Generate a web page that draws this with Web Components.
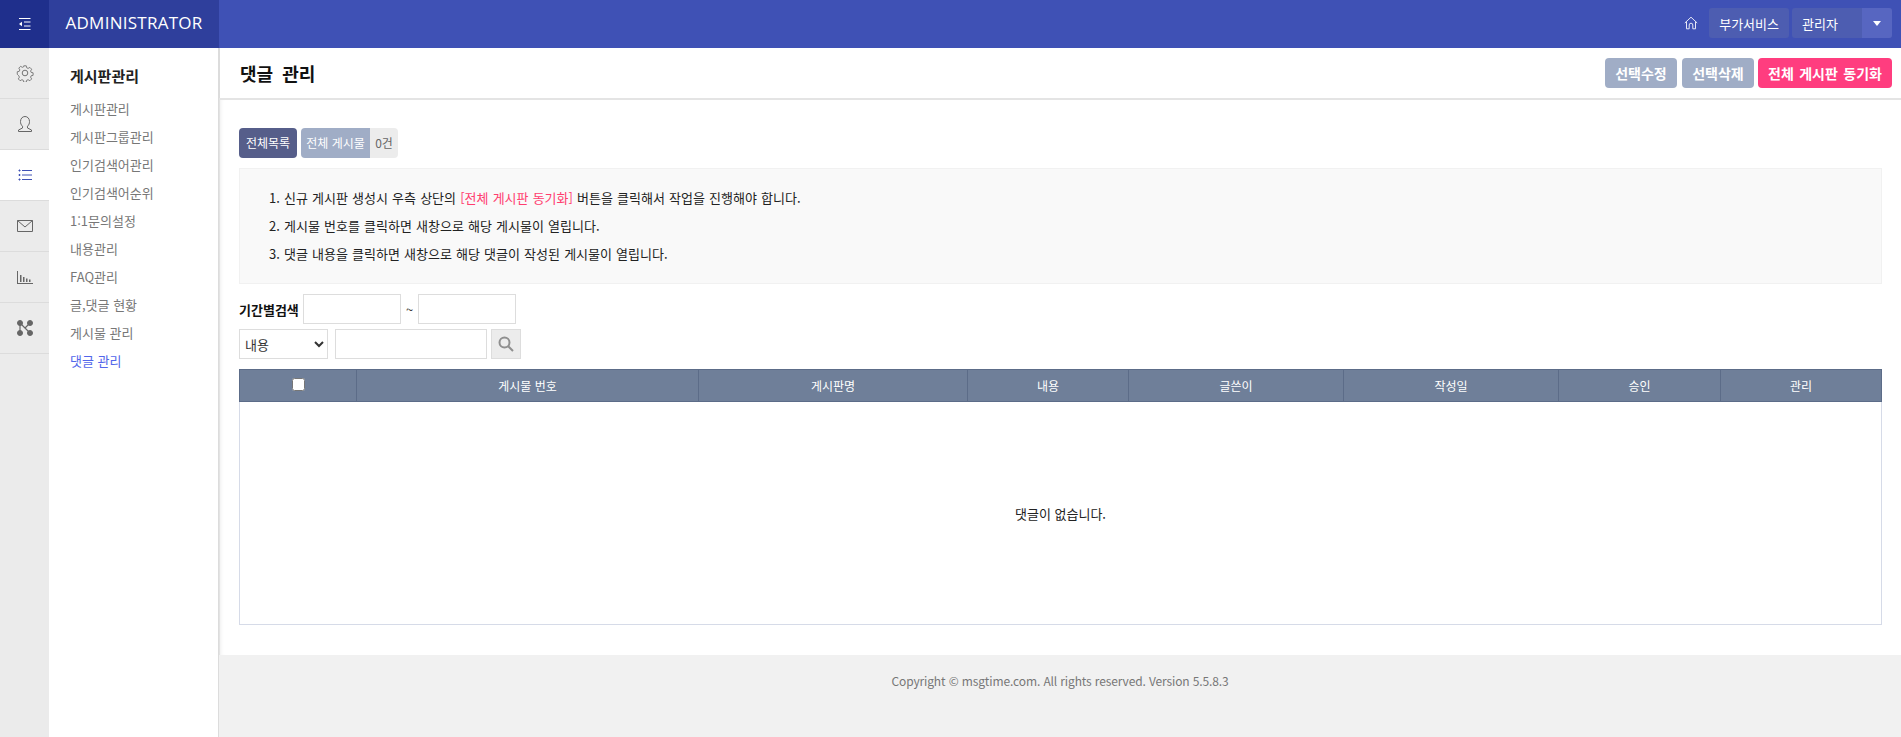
<!DOCTYPE html>
<html lang="ko">
<head>
<meta charset="utf-8">
<title>댓글 관리</title>
<style>
  html, body { margin: 0; height: 100%; background: #fff; }
  body { font: 13px "Noto Sans CJK KR", "Noto Sans", sans-serif; color: #222; overflow: hidden; }
  admin-shell { height: 737px; }
</style>
</head>
<body>

<admin-shell>
  <admin-topbar slot="top"></admin-topbar>
  <admin-rail slot="rail"></admin-rail>
  <admin-menu slot="menu"></admin-menu>
  <page-head title="댓글 관리"></page-head>
  <board-stats></board-stats>
  <notice-box>
    <li>신규 게시판 생성시 우측 상단의 <b>[전체 게시판 동기화]</b> 버튼을 클릭해서 작업을 진행해야 합니다.</li>
    <li>게시물 번호를 클릭하면 새창으로 해당 게시물이 열립니다.</li>
    <li>댓글 내용을 클릭하면 새창으로 해당 댓글이 작성된 게시물이 열립니다.</li>
  </notice-box>
  <search-form></search-form>
  <comment-table></comment-table>
  <page-footer></page-footer>
</admin-shell>

<script>
const FONT = '"Noto Sans CJK KR", "Noto Sans", sans-serif';

function shadow(el, html) {
  const root = el.attachShadow({mode: 'open'});
  root.innerHTML = html;
  return root;
}

customElements.define('admin-shell', class extends HTMLElement {
  constructor() {
    super();
    shadow(this, `
      <style>
        :host { display: grid; grid-template-rows: 48px 1fr; grid-template-columns: 49px 170px 1fr; }
        .top { grid-column: 1 / 4; }
        .main { display: flex; flex-direction: column; min-width: 0; }
        .body { padding: 28px 19px 0 20px; flex: 1; display: flex; flex-direction: column; box-shadow: inset 6px 0 5px -5px #e8e8e8; }
      </style>
      <div class="top"><slot name="top"></slot></div>
      <slot name="rail"></slot>
      <slot name="menu"></slot>
      <div class="main">
        <slot name="head"></slot>
        <div class="body"><slot></slot></div>
        <slot name="foot"></slot>
      </div>`);
  }
  connectedCallback() {
    this.querySelector('page-head').slot = 'head';
    this.querySelector('page-footer').slot = 'foot';
  }
});

customElements.define('admin-topbar', class extends HTMLElement {
  constructor() {
    super();
    shadow(this, `
      <style>
        :host { display: flex; height: 48px; background: #3f51b5; color: #fff; align-items: center; font-family: ${FONT}; }
        .toggle { width: 49px; height: 48px; background: #1f2f8c; display: flex; align-items: center; justify-content: center; }
        .brand { width: 170px; height: 48px; background: #2f3f9c; text-align: center; font: 17px/45px "Open Sans", ${FONT}; letter-spacing: .25px; }
        .right { margin: -2px 9px 0 auto; display: flex; align-items: center; gap: 3px; font-size: 13px; }
        .home { margin-right: 8px; display: flex; }
        .chip { height: 30px; background: #4d5db1; border-radius: 3px; display: flex; align-items: center; padding: 0 10px; }
        .user { width: 100px; box-sizing: border-box; padding: 0 0 0 10px; justify-content: space-between; overflow: hidden; }
        .caret { width: 30px; height: 30px; background: #5766c1; display: flex; align-items: center; justify-content: center; }
      </style>
      <div class="toggle">
        <svg width="14" height="14" viewBox="0 0 14 14" fill="none" stroke="#fff" stroke-width="1">
          <path d="M1 1.500h11.500M6 5h6.500M6 9h6.500M1 12.500h11.500"/><path d="M1 7l3-2.200v4.400z" fill="#fff" stroke="none"/>
        </svg>
      </div>
      <div class="brand">ADMINISTRATOR</div>
      <div class="right">
        <span class="home">
          <svg width="14" height="14" viewBox="0 0 14 14" fill="none" stroke="#e6e8f6" stroke-width="1">
            <path d="M.8 7L7 1.200 13.200 7M2.500 5.800V12.800H5.200V9a1.800 1.800 0 0 1 3.600 0v3.800h2.700V5.800"/>
          </svg>
        </span>
        <span class="chip">부가서비스</span>
        <span class="chip user">관리자<span class="caret">
          <svg width="8" height="5" viewBox="0 0 8 5"><path d="M0 0h8L4 5z" fill="#fff"/></svg>
        </span></span>
      </div>`);
  }
});

customElements.define('rail-item', class extends HTMLElement {
  constructor() {
    super();
    shadow(this, `
      <style>
        :host { display: flex; height: 50px; align-items: center; justify-content: center; border-bottom: 1px solid #dcdcdc; color: #666; }
        :host([active]) { background: #fff; color: #3f51b5; }
      </style>
      <slot></slot>`);
  }
});

customElements.define('admin-rail', class extends HTMLElement {
  constructor() {
    super();
    shadow(this, `
      <style>
        :host { display: block; background: #ebebeb; }
        svg { display: block; }
      </style>
      <rail-item>
        <svg width="18" height="18" viewBox="0 0 18 18" fill="none" stroke="currentColor" stroke-width=".9">
          <circle cx="9" cy="9" r="2.800"/>
          <path d="M7.600 1h2.800l.5 2.200 1.500.7 2-1.100 2 2-1.200 2 .6 1.500 2.200.5v2.800l-2.200.5-.6 1.500 1.200 2-2 2-2-1.200-1.500.7-.5 2.200H7.600l-.5-2.200-1.500-.7-2 1.200-2-2 1.200-2-.7-1.500L.4 10.400V7.600l2.200-.5.700-1.500-1.200-2 2-2 2 1.100 1.500-.7z" transform="translate(.9 .9) scale(.9)"/>
        </svg>
      </rail-item>
      <rail-item>
        <svg width="14" height="16" viewBox="0 0 14 16" fill="none" stroke="currentColor" stroke-width="1">
          <path d="M.5 15.500h13V14l-4-2v-1.800C11 9 11.500 7.300 11.500 5.500 11.500 2.500 9.500.5 7 .5S2.500 2.500 2.500 5.500c0 1.800.5 3.500 2 4.700V12l-4 2z"/>
        </svg>
      </rail-item>
      <rail-item active>
        <svg width="14" height="12" viewBox="0 0 14 12" fill="none" stroke="currentColor">
          <path d="M4 1.500h10M4 6h10M4 10.500h10"/>
          <path d="M.5 1.500h2M1.500.5v2M.5 6h2M1.500 5v2M.5 10.500h2M1.500 9.500v2" stroke-width="1"/>
        </svg>
      </rail-item>
      <rail-item>
        <svg width="16" height="12" viewBox="0 0 16 12" fill="none" stroke="currentColor" stroke-width="1">
          <path d="M.5.500h15v11H.5zM.5.500L8 7l7.500-6.500"/>
        </svg>
      </rail-item>
      <rail-item>
        <svg width="16" height="13" viewBox="0 0 16 13" fill="currentColor">
          <path d="M0 0h1v12h15v1H0z"/><path d="M3 4h1.500v7H3zM6 6h1.500v5H6zM9 7.500h1.500V11H9zM12 8.500h1.500V11H12z"/>
        </svg>
      </rail-item>
      <rail-item>
        <svg width="16" height="16" viewBox="0 0 16 16" fill="currentColor" stroke="currentColor">
          <circle cx="3" cy="3" r="2.500"/><circle cx="13" cy="3" r="2.500"/><circle cx="3" cy="13" r="2.500"/><circle cx="13" cy="13" r="2.500"/>
          <path d="M3 3l10 10M3 3v10M13 3L8 8" fill="none" stroke-width="1.200"/>
        </svg>
      </rail-item>`);
  }
});

customElements.define('admin-menu', class extends HTMLElement {
  constructor() {
    super();
    const items = ['게시판관리', '게시판그룹관리', '인기검색어관리', '인기검색어순위', '1:1문의설정', '내용관리', 'FAQ관리', '글,댓글 현황', '게시물 관리', '댓글 관리'];
    shadow(this, `
      <style>
        :host { display: block; background: #fff; border-right: 2px solid #dcdcdc; margin-right: -1px; padding: 15px 0 0 21px; font-family: ${FONT}; }
        h2 { margin: 0 0 6px; font-size: 15px; line-height: 26px; font-weight: 700; color: #222; }
        a { display: block; height: 28px; line-height: 28px; font-size: 13px; color: #777; }
        a.on { color: #5266ea; }
      </style>
      <h2>게시판관리</h2>
      ${items.map((t, i) => `<a class="${i == items.length - 1 ? 'on' : ''}">${t}</a>`).join('')}`);
  }
});

customElements.define('page-head', class extends HTMLElement {
  constructor() {
    super();
    shadow(this, `
      <style>
        :host { display: flex; height: 50px; border-bottom: 2px solid #e4e4e4; align-items: center; padding: 0 9px 0 21px; font-family: ${FONT}; }
        h1 { margin: 0 auto 0 0; font-size: 18px; font-weight: 700; color: #111; word-spacing: 4px; }
        button { font: 700 14px ${FONT}; word-spacing: 1.500px; height: 30px; padding: 0; border: 0; border-radius: 4px; background: #a0adc6; color: #fff; margin-left: 5px; }
        .w { width: 72px; }
        .pink { width: 134px; background: #ff3d7f; margin-left: 4px; }
      </style>
      <h1>${this.getAttribute('title')}</h1>
      <button class="w">선택수정</button><button class="w">선택삭제</button><button class="pink">전체 게시판 동기화</button>`);
  }
});

customElements.define('board-stats', class extends HTMLElement {
  constructor() {
    super();
    shadow(this, `
      <style>
        :host { display: flex; height: 30px; font: 12px/30px ${FONT}; margin-bottom: 10px; }
        .all { width: 58px; text-align: center; background: #565e8a; color: #fff; border-radius: 4px; margin-right: 4px; }
        .name { width: 69px; text-align: center; background: #a0adc6; color: #fff; border-radius: 4px 0 0 4px; }
        .count { width: 28px; text-align: center; background: #ececec; color: #666; border-radius: 0 4px 4px 0; }
      </style>
      <span class="all">전체목록</span><span class="name">전체 게시물</span><span class="count">0건</span>`);
  }
});

customElements.define('notice-box', class extends HTMLElement {
  constructor() {
    super();
    shadow(this, `
      <style>
        :host { display: block; background: #f9f9f9; border: 1px solid #f1f1f1; height: 116px; box-sizing: border-box; font: 13px/28px ${FONT}; word-spacing: .5px; color: #222; margin-bottom: 10px; }
        ol { margin: 15px 0 0; padding: 0 0 0 44px; }
        ::slotted(li) { height: 28px; }
      </style>
      <ol><slot></slot></ol>`);
  }
  connectedCallback() {
    this.querySelectorAll('b').forEach(b => { b.style.fontWeight = '400'; b.style.color = '#ff3d6f'; });
  }
});

customElements.define('search-form', class extends HTMLElement {
  constructor() {
    super();
    shadow(this, `
      <style>
        :host { display: block; font: 13px ${FONT}; margin-bottom: 10px; }
        .row { display: flex; align-items: center; height: 30px; margin-bottom: 5px; }
        .row:last-child { margin-bottom: 0; }
        label { width: 64px; font-weight: 700; color: #111; white-space: nowrap; }
        input, select { box-sizing: border-box; height: 30px; border: 1px solid #ddd; background: #fff; padding: 0 1px; font: inherit; color: #333; }
        .date { width: 98px; }
        .til { width: 17px; text-align: center; color: #333; }
        select { width: 89px; margin-right: 7px; }
        .q { width: 152px; margin-right: 4px; }
        button { width: 30px; height: 30px; border: 1px solid #ddd; background: #ececec; padding: 0; display: flex; align-items: center; justify-content: center; }
      </style>
      <div class="row"><label>기간별검색</label><input class="date"><span class="til">~</span><input class="date"></div>
      <div class="row">
        <select><option>내용</option></select><input class="q">
        <button aria-label="검색">
          <svg width="16" height="16" viewBox="0 0 16 16" fill="none" stroke="#8f8f8f" stroke-width="2"><circle cx="6.500" cy="6.500" r="5"/><path d="M10.200 10.200L15 15"/></svg>
        </button>
      </div>`);
  }
});

customElements.define('comment-table', class extends HTMLElement {
  constructor() {
    super();
    const cols = [['', 117], ['게시물 번호', 342], ['게시판명', 269], ['내용', 161], ['글쓴이', 215], ['작성일', 215], ['승인', 162], ['관리', 162]];
    shadow(this, `
      <style>
        :host { display: block; font: 12px ${FONT}; }
        .wrap { border: 1px solid #d6dbe8; border-top: 0; height: 255px; }
        .head { display: flex; height: 33px; margin: 0 -1px; background: #6f7f99; border: 1px solid #5c6c88; box-sizing: border-box; color: #fff; }
        .head span { display: flex; align-items: center; justify-content: center; box-sizing: border-box; border-right: 1px solid #5c6c88; }
        .head span:last-child { border-right: 0; flex: 1; }
        input { width: 13px; height: 13px; margin: 0 0 3px; accent-color: #fff; }
        .empty { height: 222px; display: flex; align-items: center; justify-content: center; color: #222; font-size: 13px; }
      </style>
      <div class="wrap">
        <div class="head">
          ${cols.map(([t, w], i) => `<span style="width:${w}px">${i ? t : '<input type="checkbox">'}</span>`).join('')}
        </div>
        <div class="empty">댓글이 없습니다.</div>
      </div>`);
  }
});

customElements.define('page-footer', class extends HTMLElement {
  constructor() {
    super();
    shadow(this, `
      <style>
        :host { display: block; height: 82px; background: #f1f1f1; text-align: center; font: 12px/52px ${FONT}; letter-spacing: -.13px; color: #777; }
      </style>
      Copyright © msgtime.com. All rights reserved. Version 5.5.8.3`);
  }
});
</script>
</body>
</html>
